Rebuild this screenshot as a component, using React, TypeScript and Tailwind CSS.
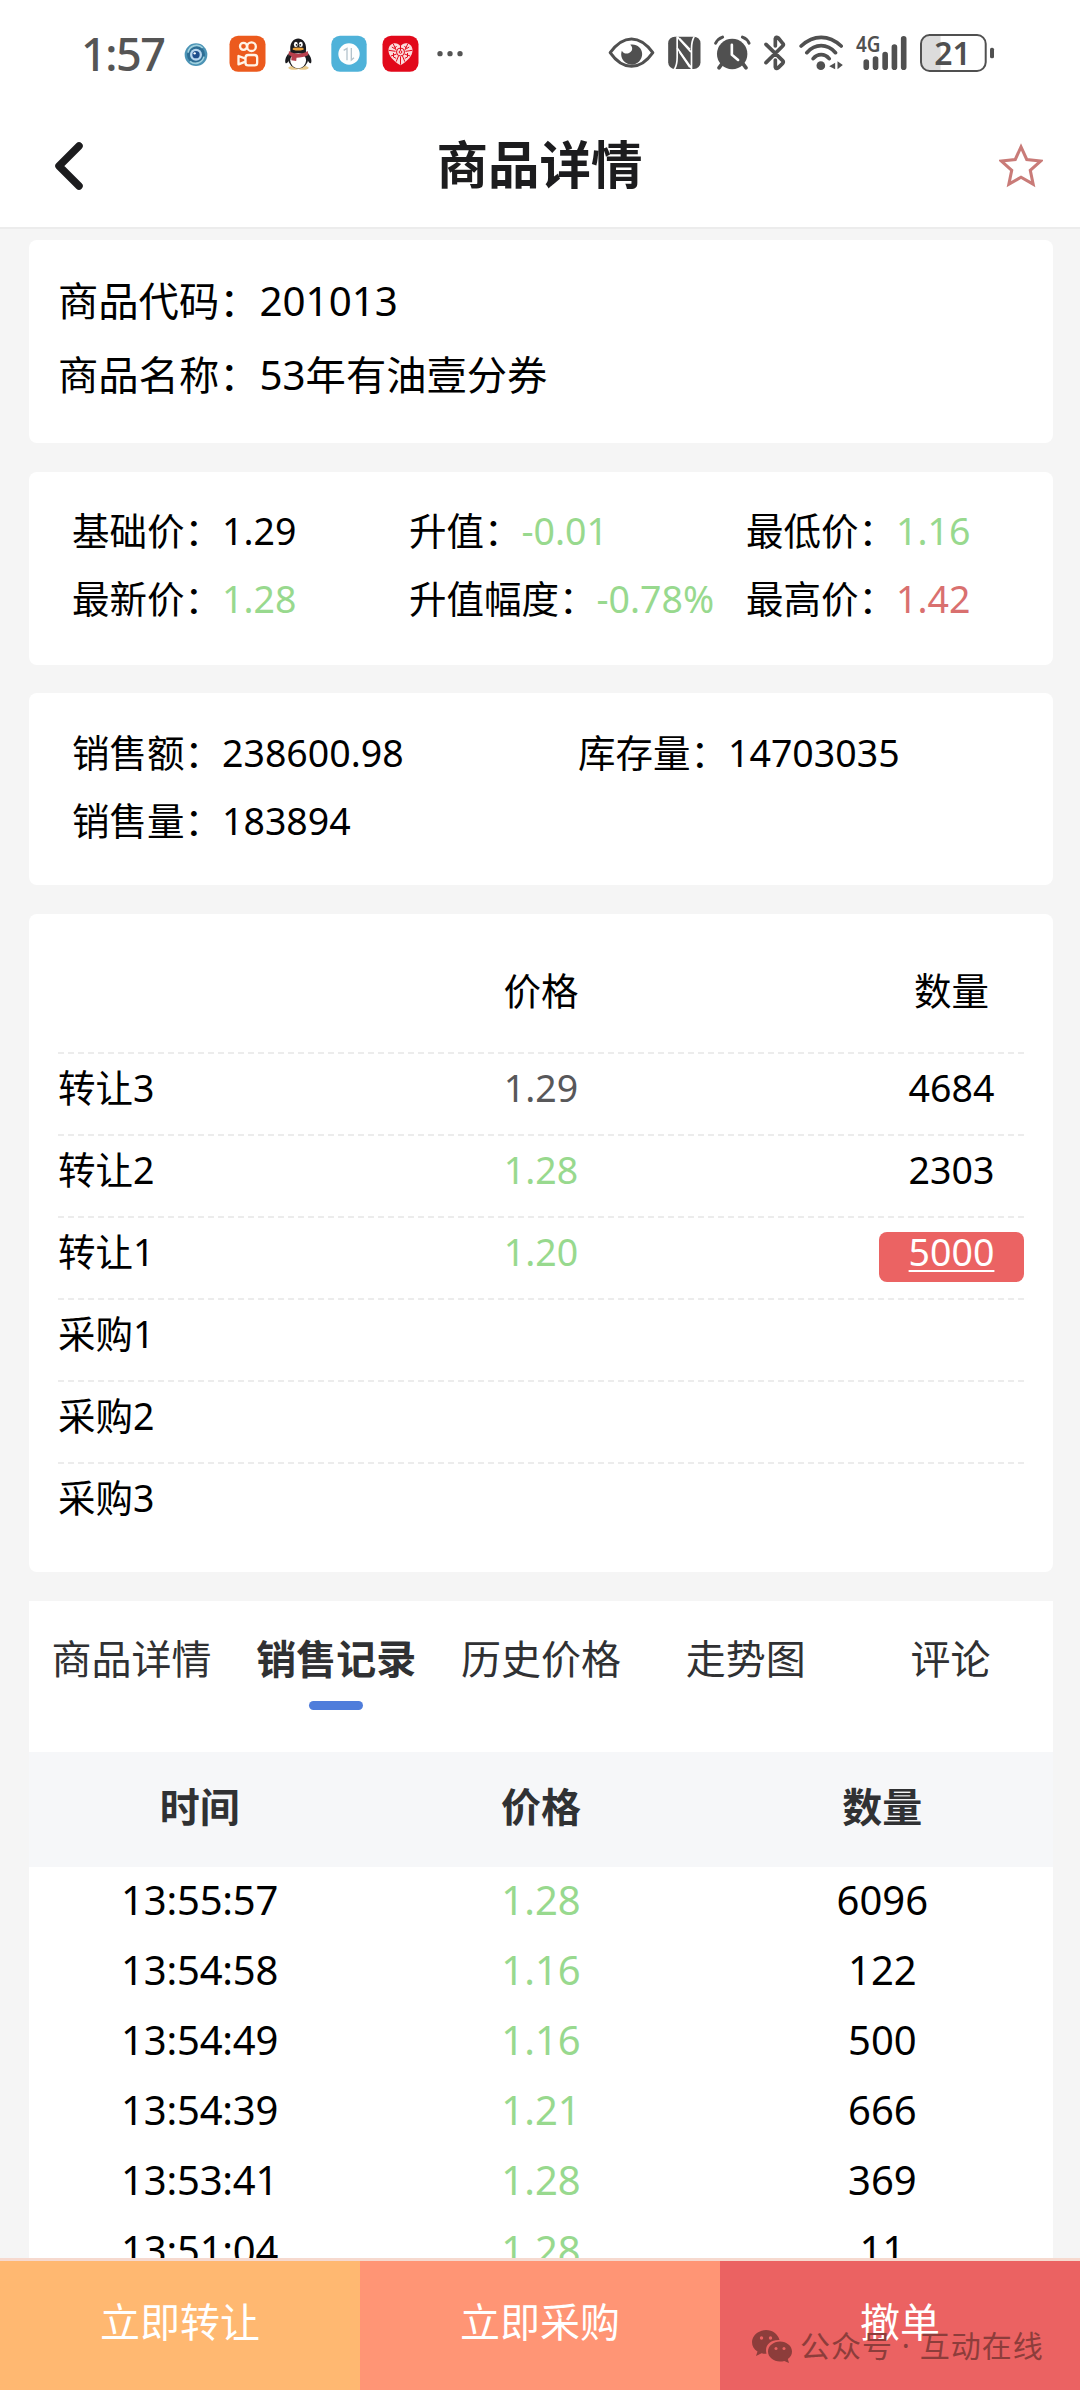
import { useState } from 'react';
import type { ReactNode } from 'react';

interface OrderRow {
  label: string;
  price?: string;
  amount?: string;
  tone?: string;
  active?: boolean;
}

interface SaleRecord {
  time: string;
  price: string;
  amount: string;
}

const orders: OrderRow[] = [
  { label: '转让3', price: '1.29', amount: '4684', tone: 'text-[#58585a]' },
  { label: '转让2', price: '1.28', amount: '2303', tone: 'text-[#98d98e]' },
  { label: '转让1', price: '1.20', amount: '5000', tone: 'text-[#98d98e]', active: true },
  { label: '采购1' },
  { label: '采购2' },
  { label: '采购3' },
];

const records: SaleRecord[] = [
  { time: '13:55:57', price: '1.28', amount: '6096' },
  { time: '13:54:58', price: '1.16', amount: '122' },
  { time: '13:54:49', price: '1.16', amount: '500' },
  { time: '13:54:39', price: '1.21', amount: '666' },
  { time: '13:53:41', price: '1.28', amount: '369' },
  { time: '13:51:04', price: '1.28', amount: '11' },
];

const tabs = ['商品详情', '销售记录', '历史价格', '走势图', '评论'];

// --- StatusBar ---
const AppIcons = () => (
  <div className="flex items-center">
    <svg className="w-6 h-10" viewBox="0 0 72 120">
      <circle cx="36" cy="62" r="34" fill="#4b93b5" />
      <circle cx="36" cy="62" r="27" fill="#2d6d94" />
      <path d="M12 56a26 26 0 0 1 44-14M60 68a26 26 0 0 1-42 14" fill="none" stroke="#9fd0de" strokeWidth="5" />
      <circle cx="36" cy="62" r="18" fill="#b9d6f0" />
      <circle cx="36" cy="62" r="11" fill="#1f4d8c" />
      <circle cx="32" cy="58" r="3.5" fill="#fff" />
    </svg>
    <svg className="ml-[21px] w-[37px] h-10" viewBox="0 0 110 120">
      <rect x="1" y="5" width="108" height="108" rx="26" fill="#ec5a1d" />
      <g fill="none" stroke="#fff3e6" strokeWidth="7">
        <circle cx="43" cy="37" r="10.5" />
        <circle cx="67" cy="38" r="13" />
        <rect x="49" y="63" width="35" height="31" rx="8" />
        <path d="M49 74L28 66v25l21-8" strokeLinejoin="round" />
      </g>
    </svg>
    <svg className="ml-[18px] w-[29px] h-10" viewBox="0 0 88 120">
      <ellipse cx="30" cy="102" rx="17" ry="6" fill="#e8c98a" />
      <ellipse cx="58" cy="102" rx="17" ry="6" fill="#e8c98a" />
      <path d="M14 58C4 70 2 82 5 88c4 2 8-5 10-8zM73 58c10 12 12 24 9 30-4 2-8-5-10-8z" fill="#1b1b1f" />
      <ellipse cx="43" cy="72" rx="31" ry="32" fill="#1b1b1f" />
      <ellipse cx="43" cy="80" rx="24" ry="23" fill="#fff" />
      <path d="M19 46C17 2 69 2 67 46c2 16-50 16-48 0z" fill="#1b1b1f" />
      <ellipse cx="36" cy="31" rx="6" ry="8" fill="#fff" />
      <ellipse cx="51" cy="31" rx="6" ry="8" fill="#fff" />
      <circle cx="38" cy="32" r="2.6" fill="#111" />
      <circle cx="49" cy="32" r="2.6" fill="#111" />
      <ellipse cx="43" cy="45" rx="17" ry="4.5" fill="#e9a13b" />
      <path d="M15 51c16 11 41 11 57 0l2 12c-10 6-24 8-36 8l-1 10-15-2 1-12-9-4z" fill="#b8404d" />
    </svg>
    <svg className="ml-[18px] w-9 h-10" viewBox="0 0 108 120">
      <rect x="1" y="5" width="106" height="108" rx="26" fill="#4fb2d9" />
      <circle cx="54" cy="60" r="32" fill="#fdfefe" />
      <path d="M38 49l10-6v36M61 42v36l8-7" fill="none" stroke="#b4c3cc" strokeWidth="4" />
    </svg>
    <svg className="ml-[15px] w-[37px] h-10" viewBox="0 0 110 120">
      <rect x="1" y="5" width="108" height="108" rx="26" fill="#e2091b" />
      <path d="M55 94C34 80 18 66 19 47c1-20 26-26 36-10 10-16 35-10 36 10 1 19-15 33-36 47z" fill="#fbdcdc" />
      <g fill="none" stroke="#e2091b" strokeWidth="3">
        <path d="M55 35v14M33 29l9 20M77 29l-9 20M20 49l20 3M90 49l-20 3M26 66l17-6M84 66l-17-6M42 83l7-17M68 83l-7-17M55 92V68" />
        <circle cx="55" cy="54" r="12" />
        <circle cx="55" cy="54" r="4" />
        <path d="M29 39l8 5 6-8M81 39l-8 5-6-8M34 57v12l8 4M76 57v12l-8 4" />
      </g>
    </svg>
    <svg className="ml-[18px] w-[27px] h-10" viewBox="0 0 81 120">
      <g fill="#555">
        <circle cx="9" cy="59" r="8" />
        <circle cx="39" cy="59" r="8" />
        <circle cx="69" cy="59" r="8" />
      </g>
    </svg>
  </div>
);

const SystemIcons = () => (
  <div className="flex items-center text-[#505050]">
    <svg className="w-[47px] h-10" viewBox="0 0 140 120" fill="none" stroke="currentColor">
      <path d="M6 56C22 34 44 15 70 15s48 19 64 41c-16 23-38 41-64 41S22 79 6 56z" strokeWidth="9" strokeLinejoin="round" />
      <path d="M66 32c18-4 36 9 36 28 0 17-14 32-31 32-18 0-32-14-32-31 0-4 1-8 2-11 5 9 17 12 25 5 8-6 8-17 0-23z" fill="currentColor" stroke="none" />
    </svg>
    <svg className="ml-[13px] w-[33px] h-10" viewBox="0 0 98 120">
      <rect x="0" y="8" width="97" height="97" rx="20" fill="currentColor" />
      <path d="M27 8v62q0 22-8 36M34 14l31 32M34 54l31 46" fill="none" stroke="#fff" strokeWidth="5" />
      <path d="M27 8l41 46M27 42l44 62M70 106V44q0-22 8-36" fill="none" stroke="#fff" strokeWidth="5" />
    </svg>
    <svg className="ml-[13px] w-[37px] h-10" viewBox="0 0 112 120" fill="none" stroke="currentColor">
      <circle cx="55" cy="60" r="46" fill="currentColor" stroke="none" />
      <path d="M5 27Q12 14 26 9M86 9q14 5 20 18" strokeWidth="9" strokeLinecap="round" />
      <path d="M24 90l-9 12M88 90l9 12" strokeWidth="11" strokeLinecap="round" />
      <path d="M54 32v30l19 16" stroke="#fff" strokeWidth="8" strokeLinecap="round" />
    </svg>
    <svg className="ml-[13px] w-[22px] h-10" viewBox="0 0 66 120" fill="none" stroke="currentColor" strokeWidth="11" strokeLinecap="round" strokeLinejoin="round">
      <path d="M6 31l50 49q4 4 0 8L43 101q-7 6-9-2V78M6 86l50-50q4-4 0-8L43 12q-7-5-9 2v22" />
    </svg>
    <svg className="ml-[13px] w-[45px] h-10" viewBox="0 0 134 120" fill="none" stroke="currentColor" strokeWidth="11" strokeLinecap="round">
      <path d="M6 36Q34 10 66 10t60 26M23 56Q42 35 66 35t43 21M42 74q10-12 24-12t24 12" />
      <circle cx="65" cy="95" r="13" fill="currentColor" stroke="none" />
      <path d="M108 86v20L90 97zM115 82v24l16-13z" fill="currentColor" stroke="none" />
    </svg>
    <svg className="ml-[12px] w-[51px] h-10 overflow-visible" viewBox="0 0 154 120" stroke="currentColor" strokeWidth="17" strokeLinecap="round">
      <text x="0" y="54" fontSize="66" fontWeight="600" textLength="74" lengthAdjust="spacingAndGlyphs" fill="currentColor" stroke="none">4G</text>
      <path d="M31 84v16M59 75v25M88 62v38M116 39v61M144 14v86" />
    </svg>
    <svg className="ml-[13px] w-[75px] h-10 overflow-visible" viewBox="0 0 226 120">
      <path d="M28 5h34v104H28Q4 109 4 86V28Q4 5 28 5z" fill="#dcdcdc" />
      <rect x="3" y="3" width="195" height="108" rx="26" fill="none" stroke="currentColor" strokeWidth="6" />
      <text x="98" y="93" fontSize="96" fontWeight="600" textAnchor="middle" fill="currentColor">21</text>
      <rect x="211" y="41" width="12" height="32" rx="5" fill="currentColor" />
    </svg>
  </div>
);

const StatusBar = () => (
  <div className="flex items-center h-[107px] pl-[81px] pr-[85px]">
    <span className="w-[103px] text-[45px] leading-none tracking-[-1.500px] font-medium text-[#555]">1:57</span>
    <AppIcons />
    <div className="ml-auto">
      <SystemIcons />
    </div>
  </div>
);

const Field = ({ label, tone, children }: { label: string; tone?: string; children: ReactNode }) => (
  <div className="whitespace-nowrap">
    {label}：<span className={tone}>{children}</span>
  </div>
);

export default function App() {
  const [tab, setTab] = useState('销售记录');

  return (
    <div className="flex flex-col w-[1080px] h-[2390px] overflow-hidden bg-[#f5f5f5] text-black font-['Noto_Sans','Noto_Sans_CJK_SC',sans-serif]">
      {/* Header */}
      <header className="shrink-0 h-[229px] bg-white border-b-2 border-[#ececec]">
        <StatusBar />
        <div className="flex items-center justify-between h-[118px] pl-[52px] pr-[37px]">
          <svg className="w-[36px] h-[50px]" viewBox="0 0 36 50" fill="none" stroke="#1c1c1e" strokeWidth="7.5" strokeLinecap="round" strokeLinejoin="round">
            <path d="M27 5L7 25l20 20" />
          </svg>
          <h1 className="-ml-2 pb-1 text-[51.500px] leading-[60px] font-bold text-[#1c1c1e]">商品详情</h1>
          <svg className="w-[44px] h-[46px]" viewBox="1 2 46 46" fill="none" stroke="#c97b78" strokeWidth="3.2">
            <path d="M24 5l6 13.200 14.500 1.600-10.800 9.800 3 14.400L24 36.800 11.300 44l3-14.400L3.500 19.800 18 18.200z" />
          </svg>
        </div>
      </header>

      <main className="flex flex-col gap-[29px] flex-1 min-h-0 overflow-hidden pt-[11px] pl-[29px] pr-[27px]">
        <section className="shrink-0 h-[203px] rounded-lg bg-white px-[29px] pt-[24px] text-[40.300px] leading-[74px]">
          <Field label="商品代码">201013</Field>
          <Field label="商品名称">53年有油壹分券</Field>
        </section>

        <section className="shrink-0 grid grid-cols-[repeat(3,337px)] content-start h-[193px] rounded-lg bg-white pl-[43px] -mb-px pt-[25px] text-[37.500px] leading-[68px]">
          <Field label="基础价">1.29</Field>
          <Field label="升值" tone="text-[#98d98e]">-0.01</Field>
          <Field label="最低价" tone="text-[#98d98e]">1.16</Field>
          <Field label="最新价">
            <span className="text-[#98d98e]">1.28</span>
          </Field>
          <Field label="升值幅度" tone="text-[#98d98e]">-0.78%</Field>
          <Field label="最高价" tone="text-[#d9706f]">1.42</Field>
        </section>

        <section className="shrink-0 grid grid-cols-[506px_1fr] content-start h-[192px] rounded-lg bg-white pl-[43px] pt-[26px] text-[37.500px] leading-[68px]">
          <Field label="销售额">238600.98</Field>
          <Field label="库存量">14703035</Field>
          <Field label="销售量">183894</Field>
        </section>

        {/* Order book */}
        <section className="shrink-0 h-[658px] rounded-lg bg-white px-[29px] text-[37.500px]">
          <div className="grid grid-cols-[145px_1fr_145px] items-center h-[138px] pt-[17px] text-center">
            <span />
            <span>价格</span>
            <span>数量</span>
          </div>
          {orders.map((o) => (
            <div key={o.label} className="grid grid-cols-[145px_1fr_145px] items-center h-[82px] pb-3 border-t-2 border-dashed border-[#ececec] text-center leading-[50px]">
              <span className="text-left">{o.label}</span>
              <span className={o.tone}>{o.price}</span>
              {o.active ? (
                <span className="h-[50px] mt-[9px] rounded-lg bg-[#eb6363] text-white leading-[40px] underline underline-offset-4 decoration-2">{o.amount}</span>
              ) : (
                <span>{o.amount}</span>
              )}
            </div>
          ))}
        </section>

        {/* Records */}
        <section className="shrink-0 bg-white text-[40px] text-center">
          <div className="grid grid-cols-5 h-[151px] pt-[28px] text-[#303133]">
            {tabs.map((t) => (
              <button key={t} onClick={() => setTab(t)} className="flex flex-col items-center whitespace-nowrap">
                <span className={t === tab ? 'leading-[60px] font-bold' : 'leading-[60px]'}>{t}</span>
                {t === tab && <span className="mt-[12px] w-[54px] h-[9px] rounded-full bg-[#4f7ddb]" />}
              </button>
            ))}
          </div>
          <div className="grid grid-cols-3 items-center h-[115px] pb-[6px] bg-[#f6f7f9] font-bold text-[#303133]">
            <span>时间</span>
            <span>价格</span>
            <span>数量</span>
          </div>
          {records.map((r) => (
            <div key={r.time} className="grid grid-cols-3 h-[70px] leading-[66px]">
              <span className="tracking-[-0.200px]">{r.time}</span>
              <span className="text-[#98d98e]">{r.price}</span>
              <span>{r.amount}</span>
            </div>
          ))}
        </section>
      </main>

      {/* Bottom actions */}
      <footer className="relative shrink-0 grid grid-cols-3 h-[132px] border-t-[3px] border-[#f6d9cf] text-[40px] text-white">
        <button className="bg-[#ffb871] pb-2">立即转让</button>
        <button className="bg-[#ff9575] pb-2">立即采购</button>
        <button className="bg-[#eb6262] pb-2">撤单</button>
        <div className="absolute left-[751px] top-[65px] flex items-center h-10 text-[#8d3d3b]">
          <svg className="w-[42px] h-[36px]" viewBox="0 0 42 36" fill="currentColor">
            <path d="M15 2C7.500 2 1 7.500 1 14c0 4 2 7.500 5.500 9.500L5 28l5.500-2.700c1.600.4 3 .6 5 .5C13 17 20 11.500 28.500 12 27 6 21.500 2 15 2z" />
            <path d="M29 13.500c-6.500 0-12 4.400-12 10s5.500 10 12 10c1.500 0 3-.2 4.300-.6L38 35l-1.200-4c2.700-2 4.200-4.500 4.200-7.500 0-5.600-5.500-10-12-10z" />
            <g fill="#eb6262">
              <circle cx="10.500" cy="10" r="1.700" />
              <circle cx="19.500" cy="10" r="1.700" />
              <circle cx="25" cy="20.500" r="1.500" />
              <circle cx="33" cy="20.500" r="1.500" />
            </g>
          </svg>
          <span className="ml-[7px] text-[30px] leading-none tracking-[1px] whitespace-nowrap">公众号 · 互动在线</span>
        </div>
      </footer>
    </div>
  );
}
